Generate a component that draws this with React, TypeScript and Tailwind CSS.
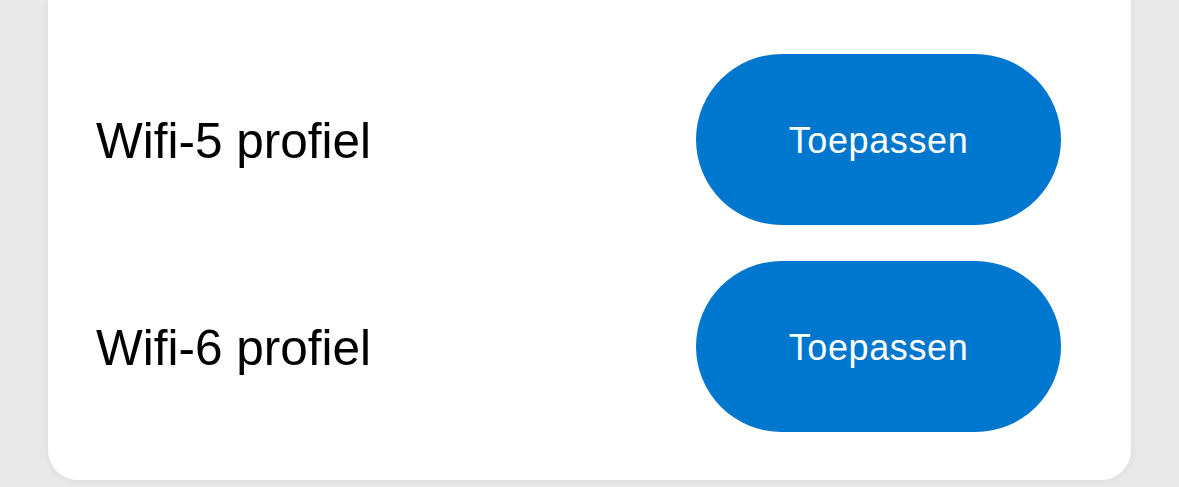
export default function App() {
  const rows = ["Wifi-5 profiel", "Wifi-6 profiel"];
  return (
    <div className="w-[1179px] h-[487px] bg-[#e8e8e8] px-[48px] overflow-hidden" style={{ fontFamily: '"Liberation Sans", Arial, sans-serif' }}>
      <div className="bg-white rounded-b-[30px] pt-[54px] pb-[48px] pl-[48px] pr-[70px] flex flex-col gap-[36px] shadow-[0_0_8px_rgba(0,0,0,0.06)]">
        {rows.map((r) => (
          <div key={r} className="flex items-center justify-between">
            <span className="text-[49.5px] text-black leading-none pt-[3px]">{r}</span>
            <button className="w-[365px] h-[171px] rounded-full bg-[#0077cf] text-white text-[36px] tracking-[0.6px] leading-none pt-[2px]">
              Toepassen
            </button>
          </div>
        ))}
      </div>
    </div>
  );
}
